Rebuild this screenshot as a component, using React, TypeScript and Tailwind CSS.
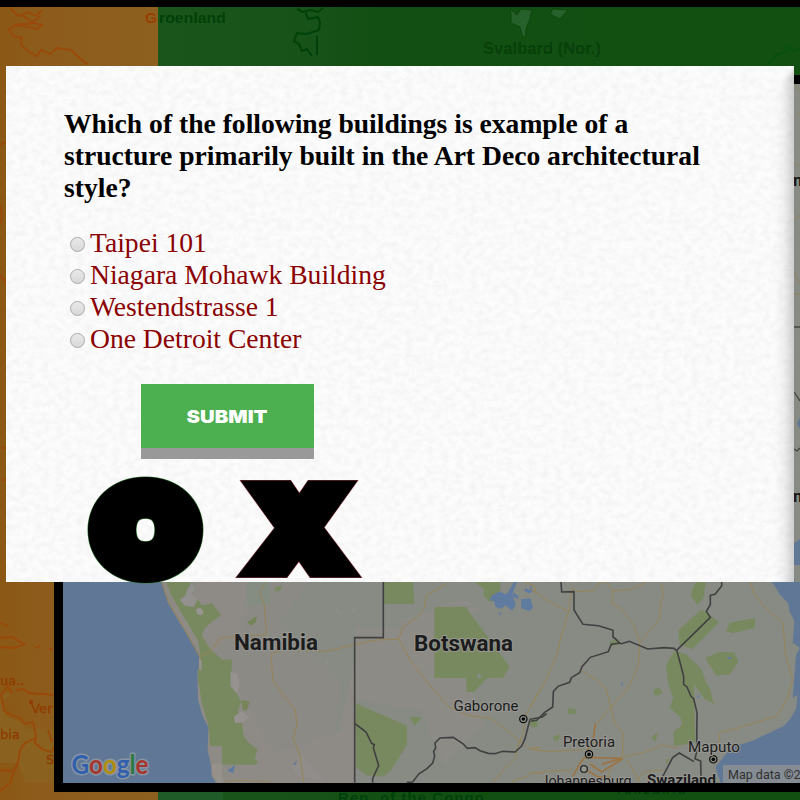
import React from "react";

const answers = [
  "Taipei 101",
  "Niagara Mohawk Building",
  "Westendstrasse 1",
  "One Detroit Center",
];

function WorldBackdrop() {
  return (
    <svg className="absolute inset-0" width="800" height="800" viewBox="0 0 800 800" aria-hidden="true">
      <defs>
        <linearGradient id="west" x1="0" y1="0" x2="1" y2="0">
          <stop offset="0" stopColor="#8b5815" />
          <stop offset="0.3" stopColor="#8d5c1d" />
          <stop offset="1" stopColor="#8d601f" />
        </linearGradient>
        <linearGradient id="east" x1="0" y1="0" x2="1" y2="0">
          <stop offset="0" stopColor="#1a551b" />
          <stop offset="0.25" stopColor="#175218" />
          <stop offset="0.35" stopColor="#124f12" />
          <stop offset="1" stopColor="#125012" />
        </linearGradient>
        <filter id="soft"><feGaussianBlur stdDeviation="0.7" /></filter>
      </defs>
      <rect width="800" height="800" fill="#000" />
      <rect y="7" width="158" height="793" fill="url(#west)" />
      <rect x="158" y="7" width="642" height="793" fill="url(#east)" />
      <rect x="158" y="790" width="65" height="10" fill="#1e5b28" />
      <path d="M12 694l-9 6 3 16 16 7 5 6h27v54H25l-7-20-18 0v-70z" fill="#8a611f" />
      <g filter="url(#soft)">
        <g fill="none" stroke="#9a4808" strokeWidth="1.8">
          <path d="M10 8l8 8 10-4 8 4 6-6M22 15l10 7 9-6M14 25l20-2 8 2-5 4-20-4-8 4 4 7 9 2-1 7 8 7 8 4 4-6 9 4 7-6 14 2 10 9 6 5" />
          <path d="M0 145l6-3M0 205l2 12-2 8M0 275l6 8M2 448h4M2 480h4" />
          <path d="M0 623l8 3M0 638l12-1 12 7-10 4-14-1M35 648l5-2M49 649h3" />
          <path d="M12 694l-4-8-7 9 3 16 10 5 6 2 5 6 8-2 3 14-1 7 7 6 9 3 4-6M16 690l8-1 5 4 25 2M35 738l-10 5-5 7-2 13-4 8-14-1M14 771l-4 12-10 8M48 730l4 12" />
        </g>
        <g fill="#8f3d05" stroke="#8f3d05" strokeWidth=".4" fontFamily="DejaVu Sans, sans-serif" fontSize="13">
          <text x="0" y="685">ua..</text><circle cx="31" cy="702" r="2" />
          <text x="31" y="713">Ver</text><text x="0" y="739">bia</text><text x="46" y="764">S</text>
        </g>
        <g fontFamily="Liberation Sans, sans-serif" fontSize="15" fontWeight="bold">
          <text x="145" y="23" fill="#9a3d05">G</text>
          <text x="159" y="23" textLength="67" lengthAdjust="spacingAndGlyphs" fill="#064008">roenland</text>
        </g>
        <g fill="none" stroke="#064008" strokeWidth="2">
          <path d="M297 9l6 3 8-2 7 2 5-4M305 11l3 8 10-2 2 6-1 7-12 4-10-1-3 8 5 3 3 7 5-2 5 7M317 36v19" />
          <path d="M768 64l8-9 8-3 5-5 4 4 7-2" stroke="#075009" />
        </g>
        <path d="M510 9l7 6 4-6 11 1-2 8-4 11-1 9-3-3-2-8-9-4v-8zM553 9l15 1-8 9-10-5z" fill="#286029" stroke="#0b420c" strokeWidth=".8" />
        <text x="483" y="54" textLength="118" lengthAdjust="spacingAndGlyphs" fill="#073f08" fontFamily="Liberation Sans, sans-serif" fontSize="16" fontWeight="bold">Svalbard (Nor.)</text>
        <g fill="#06410a" fontFamily="Liberation Sans, sans-serif" fontSize="15" fontWeight="bold">
          <text x="338" y="803" textLength="146">Rep. of the Congo</text>
          <text x="615" y="794" fontSize="12" textLength="70">Tanzania</text>
        </g>
      </g>
    </svg>
  );
}

function City({ x, y }: { x: number; y: number }) {
  return (
    <g>
      <circle cx={x} cy={y} r="11" fill="#8b8e86" stroke="#080808" strokeWidth="3.5" />
      <circle cx={x} cy={y} r="5.5" fill="#080808" />
    </g>
  );
}

function RegionalMap() {
  return (
    <svg className="block" width="737" height="699" viewBox="63 84 737 699" role="img" aria-label="Google map">
      <rect x="63" y="84" width="737" height="699" fill="#888b84" />
      {/* Side strip seen past the dialog */}
      <g fill="none" stroke="#908158" strokeWidth="1">
        <path d="M794 84l6 6M797 115l3-2M794 163l6 3M794 221l6-6M794 273l4 8 2 3M794 294h6" />
        <path d="M794 494h6" />
      </g>
      <path d="M794 327h6M794 392l6 9M794 449l3 2 3-3" fill="none" stroke="#444" strokeWidth="1.3" />
      <path d="M800 417l-3 7 3 5zM800 539l-14 10 14 50zM773 565h27v50l-20-20-7-12z" fill="#607895" />
      <text x="793" y="186" fontFamily="Roboto, sans-serif" fontSize="17" fontWeight="700" fill="#181818">m</text>
      <text x="793" y="502" fontFamily="Roboto, sans-serif" fontSize="17" fontWeight="700" fill="#181818">m</text>

      <path d="M160 582h150l-30 40 60 60-10 101H210z" fill="#8b8a84" />
      <g fill="#8e8b86">
        <path d="M168 582h84l-7 35-3 19-35 18 10 10 15-2 12 40 30 50 65-20 18-80-2 131H215z" />
        <path d="M355 700l65 10 25 55 40-40-15-40-45-55-70-4z" opacity=".7" />
        <path d="M400 620l50-16 30 5-30 20 30 35-60-2z" opacity=".7" />
      </g>

      {/* West coast */}
      <g transform="translate(0 560) scale(.33333)">
        <path d="M189 60H484l20 69 45 75 35 55 16 32 2 37-10 4 2 87 14 50 17 32-2 70 10 43 2 34 15 24v10H189z" fill="#607895" />
        <path d="M484 63h70l26 8 5 14-10 18 18 15 13 18 17-3 12-5 29 38-26 17-22 20-11 22 27 44 35 30 30-1-5 69 14 23 18 37-10 24 12 35 5 43 14 17 28 23-9 26 10 12-8 7H666v-55l-36-2-5-62-20-70-12-74 7-72-5-36-56-93-25-45-18-45z" fill="#788960" />
        <path d="M575 67l10 18-10 18 18 15-11 23-28-4-14-18 15-11 5-15z" fill="#93918f" />
        <path d="M588 147l13-4 10 12-6 11-14-4z" fill="#969591" />
        <path d="M597 290l8 12v30l-8-5zM636 612h30v57h-12l-18-28z" fill="#96918a" />
        <path d="M692 337l20 5 7 34-10 23-17-20zM702 470l23-17 21 17-17 18-23 1z" fill="#969290" />
        <path d="M740 65h70v68l-52 5-20-10z" fill="#858d83" />
        <path d="M741 187l29-19-2 18-14 11z M725 420l24 5-9 27-13-3z" fill="#758558" />
        <path d="M682 632l23-18-5 26z" fill="#5e7a9c" />
        <path d="M484 65l22 63 45 75 48 88 30-15 35-43 135-9M797 68l-18 27 14 40 7 90M675 665l45-4 90 5" fill="none" stroke="#978456" strokeWidth="3" />
      </g>

      <g transform="translate(270 570) scale(.33333)">
        <g fill="#788960">
          <path d="M342 36h87l4 65h-90zM493 111h94l132 180-20 33h-48l-38 42h-24v-42h-96zM257 400l154 67v57l-50 80-22 16-50-4-32-25zM418 441h37l-20 27zM612 36h79v62l-35-5-15-15v-22zM15 54l21-8-5 14-15 7z" />
          <circle cx="792" cy="460" r="12" />
        </g>
        <circle cx="628" cy="319" r="7" fill="#858d83" />
        <g fill="#607ba0">
          <path d="M712 70l20-34h9l-15 38 12 30-12 18-20-16-11 10-18-5-5-17-14-3 9-16 22-11 14 8zM730 67l17 12-5 8-15-8zM765 55l23 8-10 7-14-6zM753 88l28-3 8 28-11 10-24-8zM684 132l10-5-2 8zM70 583l12-13-6 15z" />
        </g>
        <g fill="#939090" opacity=".55">
          <path d="M195 107l20 28-15-7zM240 130l14-20 3 17zM155 290l22-27-3 15zM70 600l25-48 35 43 35 38-75-13zM420 275l18 10 4 22zM735 270l38 18-31-10zM520 100l75-8 12 14z" />
        </g>
        <g fill="none" stroke="#978456" strokeWidth="3">
          <path d="M0 252l40-12 128 4 90-21 60-13 68-2 14-38 40-27 22-27 8-43 26-10 34-24M386 208l35 64 70 88 45 50 60 27 66 8 40 30 45 35 30 24 35-1" />
          <path d="M4 260l4 70 23 33 45 58 5 45-11 40 20 50 11 82M740 535l-2 28-30 28-42 50M725 636l45-17 15-12 30 3M810 360l-45 80-5 50-20 45" />
          <path d="M765 36l27 11 8 24" />
        </g>
        <g fill="none" stroke="#404040" strokeWidth="4.800">
          <path d="M340 36v167h-86v435M254 460l34 26 17 34 8 4-3 10 16 53-18 38v13M410 638l18-2 18-24 25-16 17-17 6-20-3-15 6-10-2-15 15-15 40-2 30 20 12 13 23-2 15 9 25 8 20 1 23-7 37 2 20-18 10-22 15-58 37-7 13-10" />
        </g>
      </g>

      <g transform="translate(530 570) scale(.33333)">
        <path d="M724 36h86v609H574l-18-54 50-60 60-18 95-45 19-20 18-32 4-40-14 8 10-130 12-20-22-16 5-65-15-30-3-20 7-15-15-16-10-15-15-3z" fill="#607895" />
        <g fill="#788960">
          <path d="M498 36h29l-7 50-18 18-20-28 6-22zM445 180l68-60 18 8 36 29-80 80-38-13zM600 158l76-15-2 31-66 16-21-7zM525 264l40-17h48l12 28-25 38-40 4zM408 285l26-43 33 10 47 45 14 40 12 18 12 47-28-14-32-45 4 174-14 5-50 5-1-42 25-20-5-24-32-27 10-30-16-50zM240 214l25-6 10 15-37 6zM374 358l14-6 9 17-15 8-12-6zM113 414l24 4v15l-22-2zM70 498l20-3-3 14-16 4zM0 450h22v16H0zM407 570l13-6-10 20zM370 495l14-7-8 27-11-10z" />
        </g>
        <path d="M0 45l8 10-8 10zM0 90l7 22-7 10zM273 340l6-5-3 15zM500 379l9-5-3 10zM588 260l17 2-4 8z" fill="#607ba0" />
        <g fill="none" stroke="#978456" strokeWidth="3">
          <path d="M0 410l40-65 40-88 14-60 22-72L50 90 0 55M115 125l12-72 13 12 50-3 20-26h20l20 26-6 38 28 15 38 48 20 54 28-34 30-35 4-50 8-25-6-33M245 63l60-5 45-22M330 217l-6 73-32 68-50 53-40 50M155 302l45 29 28 25 16 60 10 45 25 28-2 72-30 28-20 40M0 537l55 8 105-6M0 610l55-6 70-4M280 560l70-15 45-20 50 10M660 36l13 35 26 35 60 54 8 95 10 35 11 38-17 60-31 50-75 23-50 16-45 10-5 50M290 570l40 65M400 600l-60 5-20 30" />
          <path d="M150 580l15-18 110 3-60 18M170 545l18-25 8-60M165 598l38 22 40 3M150 580l-22 40M180 582l35 24 64-40" strokeWidth="5" stroke="#9c7444" />
        </g>
        <g fill="none" stroke="#404040" strokeWidth="4.800">
          <path d="M93 36l2 30 37-1v55l27 43 47 4 43 14v20l10 8 8 9 8 3 23-7 55 23 50-4 29 2 9 8 20 76v24l10 8 12 28 8 7 10 42-1 118-5 20 17 7 1 44M272 219l-28 4-9 22-54 17-25 28-7 18-25 15-5 14-35 12-14 16-2 46-24 16-24 24-19 3M575 36v12l-20 25-14 3v28l-12 20 12 18-102 100M398 620l30-57 20-14 44 26" />
        </g>
        <City x={177} y={553} />
        <City x={550} y={568} />
        <circle cx="162" cy="597" r="10" fill="#969791" stroke="#292929" strokeWidth="4" />
      </g>
      <g transform="translate(270 570) scale(.33333)"><City x={760} y={447} /></g>

      <g fontFamily="Roboto, sans-serif" fill="#1c1c1c" stroke="#979793" strokeWidth="2" paintOrder="stroke" strokeLinejoin="round">
        <g fontSize="21.5" fontWeight="700">
          <text x="234" y="650" textLength="84" lengthAdjust="spacingAndGlyphs">Namibia</text>
          <text x="414" y="651" textLength="99" lengthAdjust="spacingAndGlyphs">Botswana</text>
        </g>
        <text x="647" y="785" fontSize="15" fontWeight="700" textLength="69" lengthAdjust="spacingAndGlyphs">Swaziland</text>
        <g fontSize="15">
          <text x="453.500" y="711" textLength="65" lengthAdjust="spacingAndGlyphs">Gaborone</text>
          <text x="563" y="747" textLength="52" lengthAdjust="spacingAndGlyphs">Pretoria</text>
          <text x="688" y="751.500" textLength="52" lengthAdjust="spacingAndGlyphs">Maputo</text>
          <text x="540.500" y="786" textLength="91" lengthAdjust="spacingAndGlyphs">Johannesburg</text>
        </g>
      </g>
      <rect x="723" y="765" width="77" height="18" fill="#858c93" />
      <text x="728" y="779" fontFamily="Roboto, sans-serif" fontSize="12.500" fill="#303030">Map data ©2016</text>
      <text x="71.500" y="774" textLength="77" lengthAdjust="spacingAndGlyphs" fontFamily="Lato, sans-serif" fontSize="26" fontWeight="700" stroke="#8794a3" strokeWidth="3" paintOrder="stroke" strokeLinejoin="round">
        <tspan fill="#325fae">G</tspan><tspan fill="#a7372e">o</tspan><tspan fill="#b28c0c">o</tspan><tspan fill="#325fae">g</tspan><tspan fill="#2b7a42">l</tspan><tspan fill="#a7372e">e</tspan>
      </text>
    </svg>
  );
}

function PaperTexture() {
  return (
    <svg className="absolute inset-0" width="788" height="516" aria-hidden="true">
      <defs>
        <filter id="paper" x="0" y="0" width="100%" height="100%" colorInterpolationFilters="sRGB">
          <feTurbulence type="fractalNoise" baseFrequency="0.14 0.17" numOctaves="4" seed="8" />
          <feColorMatrix values="0 0 0 0 .78  0 0 0 0 .78  0 0 0 0 .78  .32 0 0 0 -.11" />
        </filter>
        <filter id="shade-soft"><feGaussianBlur stdDeviation="2" /></filter>
        <linearGradient id="edge">
          <stop offset="0" stopColor="#888" stopOpacity="0" />
          <stop offset=".4" stopColor="#888" stopOpacity=".08" />
          <stop offset="1" stopColor="#777" stopOpacity=".48" />
        </linearGradient>
      </defs>
      <rect width="788" height="516" filter="url(#paper)" />
      <path d="M792 -1L768 27V524H792z" fill="url(#edge)" filter="url(#shade-soft)" />
    </svg>
  );
}

function Verdict({ letter, color, font, size, grow, width, left, baseline }: {
  letter: string; color: string; font: string; size: number; grow: number; width: number; left: number; baseline: number;
}) {
  const shared = {
    x: left, y: baseline, fontSize: size, textLength: width, lengthAdjust: "spacingAndGlyphs" as const,
    fontFamily: font, fontWeight: 900, strokeMiterlimit: 8,
  };
  return (
    <svg className="block overflow-visible" width="147" height="108">
      <text {...shared} fill={color} stroke={color} strokeWidth={grow + 1}>{letter}</text>
      <text {...shared} fill="#000" stroke="#000" strokeWidth={grow}>{letter}</text>
    </svg>
  );
}

function QuizDialog() {
  return (
    <section role="dialog" className="absolute left-[6px] top-[66px] h-[516px] w-[788px] bg-[#fcfcfc]">
      <PaperTexture />
      <form className="relative flex flex-col items-start pl-[58px] pt-[42px] font-['Liberation_Serif',serif] text-[27.6px] leading-8" onSubmit={(e) => e.preventDefault()}>
        <h1 className="w-[660px] font-bold text-black">
          Which of the following buildings is example of a<br />structure primarily built in the Art Deco architectural<br />style?
        </h1>
        <div className="mt-[23px] flex flex-col pl-[6px] text-[#8b0000]">
          {answers.map((answer) => (
            <label key={answer} className="flex h-8 items-center gap-[5px] whitespace-nowrap">
              <input type="radio" name="answer" className="mt-[3px] size-[15px] appearance-none rounded-full border border-[#a9a9a9] bg-linear-to-b from-[#eaeaea] to-[#d8d8d8]" />
              {answer}
            </label>
          ))}
        </div>
        <button className="ml-[77px] mt-[29px] h-16 w-[173px] bg-[#4caf50] shadow-[0_11px_0_#999]">
          <svg className="block" width="173" height="64">
            <text x="45.500" y="39" textLength="81" lengthAdjust="spacingAndGlyphs" fontFamily="Inter, sans-serif" fontSize="18" fontWeight="900" fill="#fff">SUBMIT</text>
          </svg>
        </button>
        <div className="ml-[25px] mt-[28px] flex">
          <Verdict letter="O" color="#357c36" font="Lato, sans-serif" size={104} grow={28} width={92} left={10.5} baseline={92} />
          <Verdict letter="X" color="#8e3940" font="Inter, sans-serif" size={110} grow={17} width={95} left={15.500} baseline={92.500} />
        </div>
      </form>
    </section>
  );
}

export default function App() {
  return (
    <main className="relative h-[800px] w-[800px] overflow-hidden">
      <WorldBackdrop />
      <div className="absolute left-[54px] top-[75px] w-[755px] border-[9px] border-black">
        <RegionalMap />
      </div>
      <QuizDialog />
    </main>
  );
}
